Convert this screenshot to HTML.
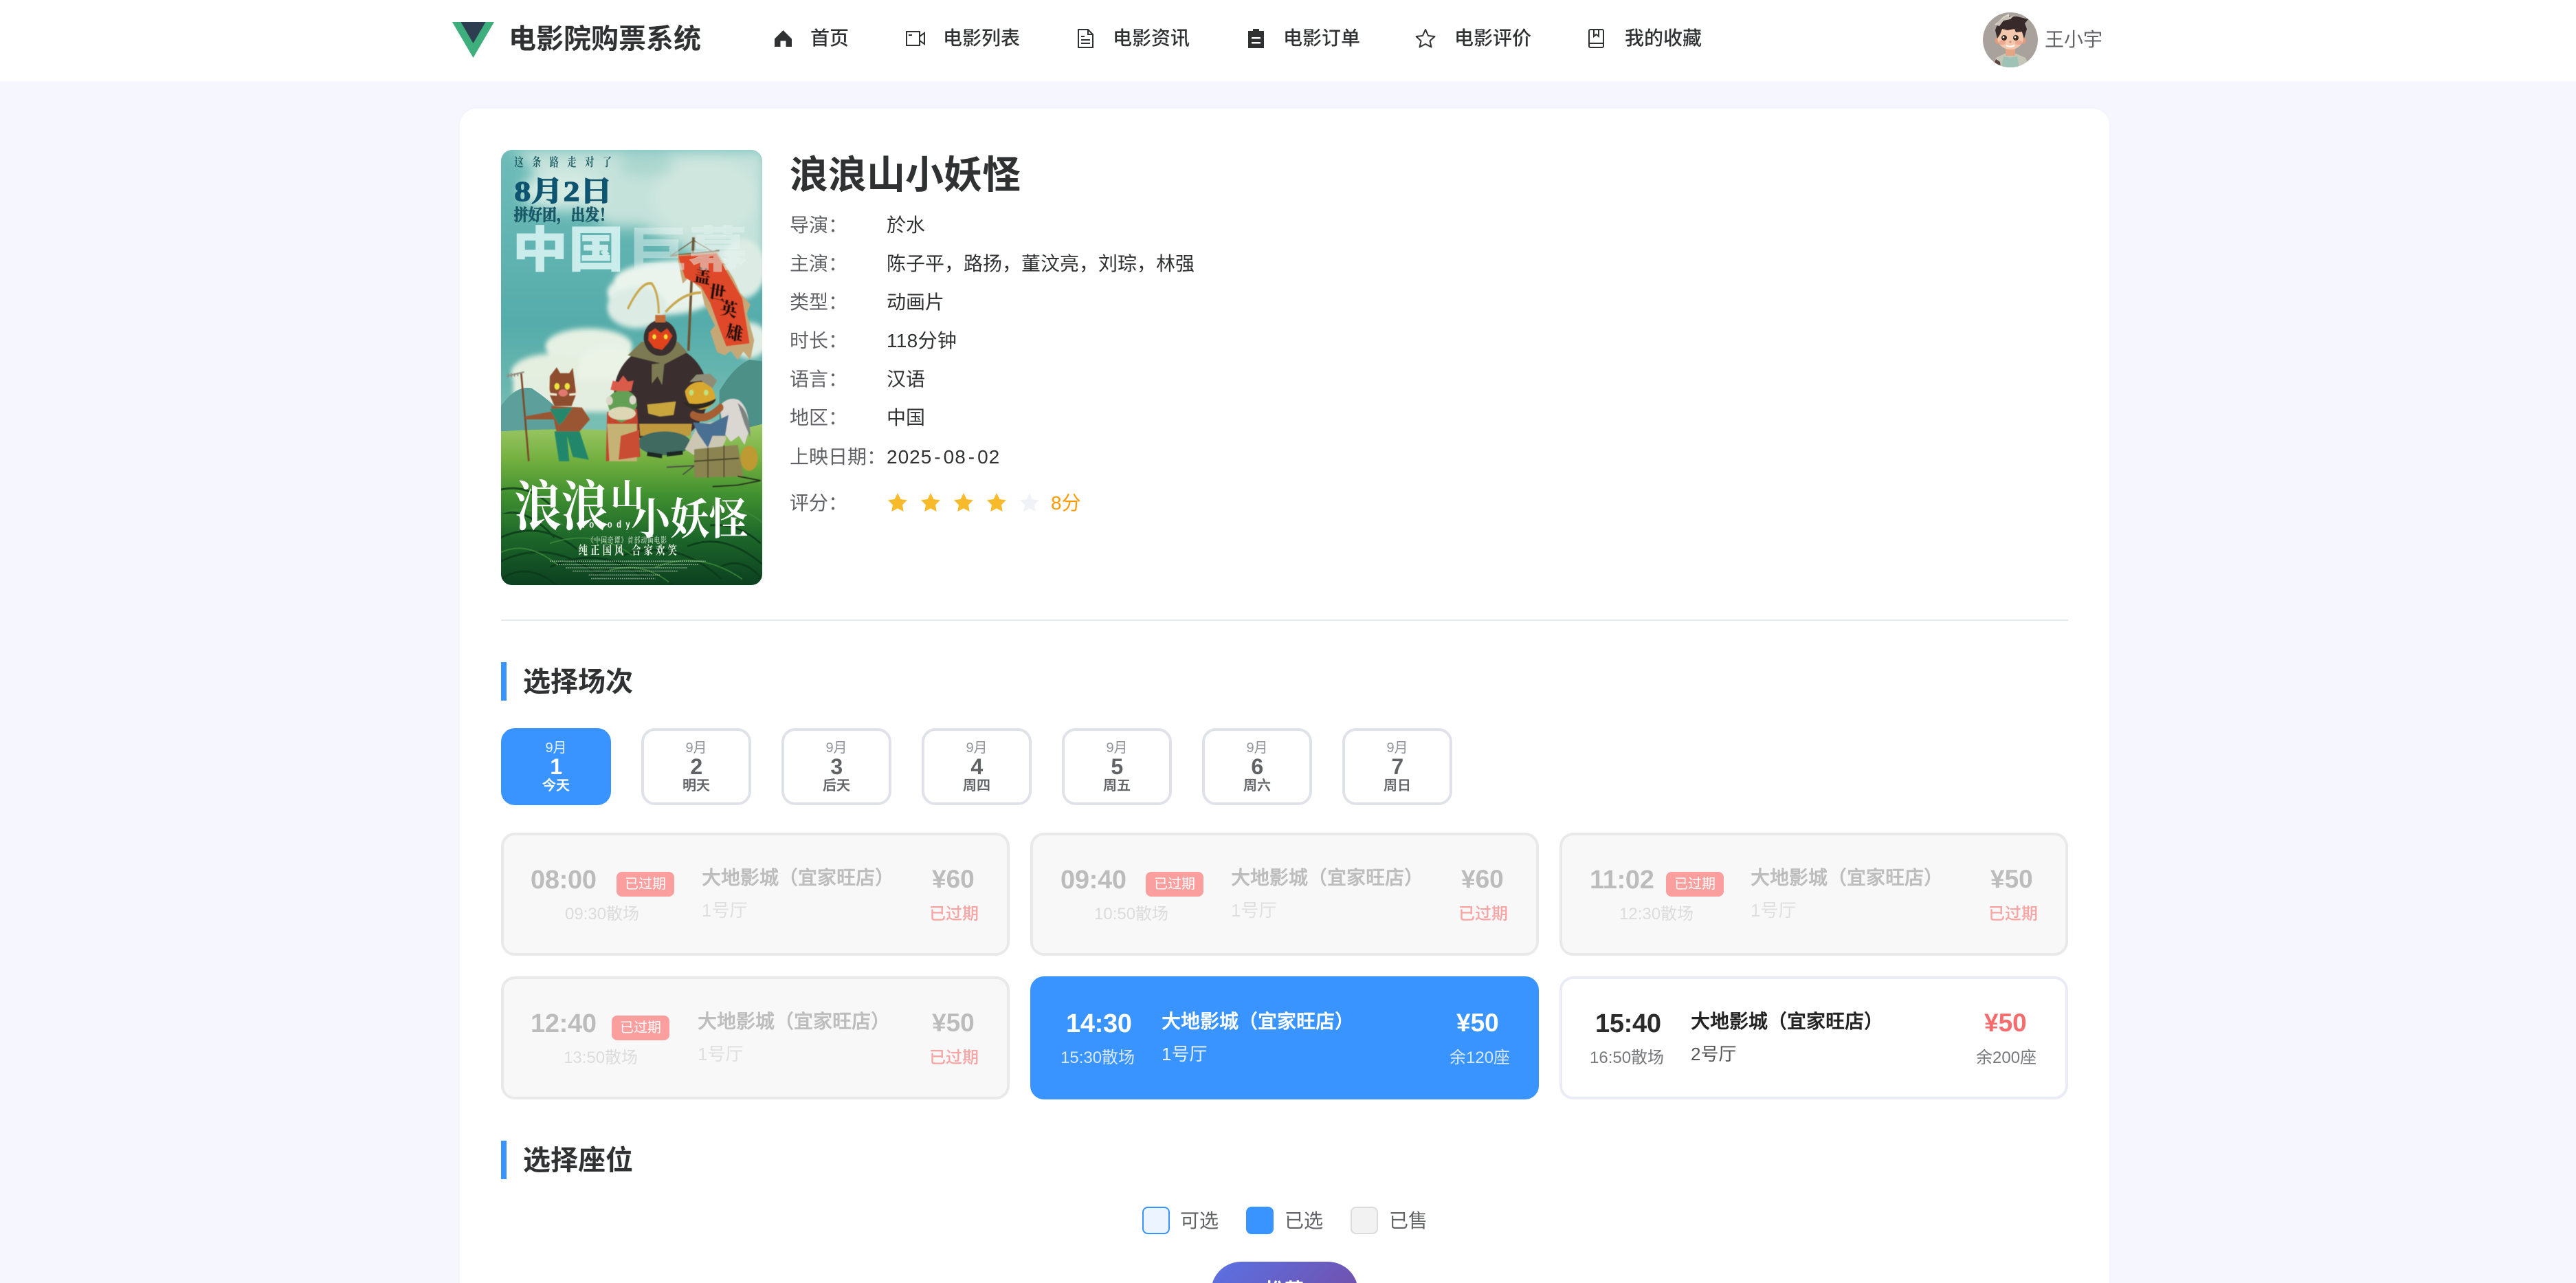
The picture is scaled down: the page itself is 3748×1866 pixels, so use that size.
<!DOCTYPE html>
<html lang="zh-CN"><head><meta charset="utf-8"><title>电影院购票系统</title>
<style>
html,body{margin:0;padding:0;width:3748px;height:1866px;overflow:hidden;background:#f6f7fe;}
body{position:relative;font-family:"Liberation Sans","Noto Sans CJK SC",sans-serif;color:#303133;}
.t{position:absolute;white-space:nowrap;line-height:40px;height:40px;}
.b{position:absolute;box-sizing:border-box;}
.nav{font-size:28px;font-weight:500;top:36px;color:#303133;}
.lab{font-size:28px;color:#606266;left:1149px;}
.val{font-size:28px;color:#303133;left:1290px;}
.h2{font-size:40px;font-weight:700;color:#303133;left:761px;line-height:56px;height:56px;}
.bar{left:729px;width:8px;height:56px;background:#3a94ff;}
.tab{top:1059px;width:160px;height:112px;border:4px solid #e0e2ea;border-radius:20px;background:#fff;text-align:center;color:#606266;}
.tab.on{background:#3a94ff;border-color:#3a94ff;color:#fff;}
.tab div{position:absolute;left:-4px;right:-4px;}
.tab .m{top:10px;font-size:20px;line-height:30px;color:#909399;}
.tab .d{top:32px;font-size:32px;line-height:40px;font-weight:700;letter-spacing:-.5px;}
.tab .w{top:65px;font-size:20px;line-height:30px;font-weight:500;-webkit-text-stroke:.3px currentColor;}
.tab.on .m{color:#e9f2ff;}
.card{width:740px;height:179px;border:4px solid #e9e9e9;border-radius:20px;background:#f8f8f8;}
.tm{font-size:38px;font-weight:700;color:#bcbcbc;letter-spacing:-.3px;}
.sub{font-size:24px;color:#dcdcdc;}
.cin{font-size:28px;font-weight:500;color:#bdbdbd;-webkit-text-stroke:.5px currentColor;}
.hall{font-size:26px;color:#dfdfdf;}
.pr{font-size:37px;font-weight:700;color:#bcbcbc;}
.ex{font-size:24px;font-weight:500;color:#f9a3a3;}
.bd{width:84px;height:36px;border-radius:8px;background:#fa9e9e;color:#fff;font-size:20px;line-height:36px;text-align:center;}
</style></head><body>

<!-- header -->
<div class="b" style="left:0;top:0;width:3748px;height:118px;background:#fff"></div>
<svg class="b" style="left:658px;top:32px" width="61" height="52" viewBox="0 0 61 52">
<polygon points="0,0 61,0 30.5,52" fill="#3eaf7c"/><polygon points="12.5,0 48.5,0 30.5,31" fill="#2c3e50"/></svg>
<div class="t" style="left:740px;top:33px;font-size:40px;font-weight:700;line-height:48px;height:48px;color:#303133">电影院购票系统</div>

<svg class="b" style="left:1127px;top:44px" width="25" height="24" viewBox="0 0 25 24"><path d="M12.5 0 25 12.5V24H16.5V15.5H8.5V24H0V12.5Z" fill="#303133"/></svg>
<div class="t nav" style="left:1179px">首页</div>
<svg class="b" style="left:1318px;top:44px" width="28" height="24" viewBox="0 0 28 24" fill="none" stroke="#303133" stroke-width="2"><rect x="1" y="2" width="19" height="20"/><path d="M20 9 27 4V20L20 15"/><path d="M4 7H9" stroke-width="2"/></svg>
<div class="t nav" style="left:1372px">电影列表</div>
<svg class="b" style="left:1568px;top:42px" width="23" height="28" viewBox="0 0 23 28" fill="none" stroke="#303133" stroke-width="2"><path d="M1 1H15L22 8V27H1Z"/><path d="M15 1V8H22M5 11H10M5 16H18M5 21H18"/></svg>
<div class="t nav" style="left:1619px">电影资讯</div>
<svg class="b" style="left:1816px;top:42px" width="23" height="28" viewBox="0 0 23 28"><path d="M7 0H16V3H23V28H0V3H7Z" fill="#303133"/><path d="M5 12H18V14.5H5ZM5 19H18V21.5H5Z" fill="#fff"/></svg>
<div class="t nav" style="left:1867px">电影订单</div>
<svg class="b" style="left:2059px;top:41px" width="30" height="29" viewBox="0 0 30 29" fill="none" stroke="#303133" stroke-width="2" stroke-linejoin="round"><path d="M15 2 19 11 28.5 12 21.5 18.5 23.5 27.5 15 23 6.5 27.5 8.5 18.5 1.5 12 11 11Z"/></svg>
<div class="t nav" style="left:2116px">电影评价</div>
<svg class="b" style="left:2311px;top:42px" width="23" height="28" viewBox="0 0 23 28" fill="none" stroke="#303133" stroke-width="2"><rect x="1" y="1" width="21" height="26" rx="2"/><path d="M1 21H22"/><path d="M8 1V11L11.5 8 15 11V1"/></svg>
<div class="t nav" style="left:2364px">我的收藏</div>

<svg class="b" style="left:2885px;top:18px" width="80" height="80" viewBox="0 0 80 80">
<defs><clipPath id="av"><circle cx="40" cy="40" r="40"/></clipPath></defs>
<g clip-path="url(#av)"><rect width="80" height="80" fill="#a9a29c"/>
<path d="M14 80 19 66 32 60 48 60 62 66 68 80Z" fill="#c5c7b6"/>
<path d="M27 80 30 64 40 66 50 64 53 80Z" fill="#9fc2b6"/>
<path d="M14 80 19 68 25 72 26 80Z" fill="#5a4440"/>
<rect x="33" y="48" width="14" height="15" fill="#e4a585"/>
<ellipse cx="21" cy="41" rx="3.5" ry="5" fill="#df9c7e"/><ellipse cx="59" cy="41" rx="3.5" ry="5" fill="#df9c7e"/>
<ellipse cx="40" cy="37" rx="19" ry="17" fill="#f3c8ac"/>
<ellipse cx="28" cy="44" rx="5" ry="3.5" fill="#ee9f8b" opacity=".75"/><ellipse cx="52" cy="44" rx="5" ry="3.5" fill="#ee9f8b" opacity=".75"/>
<circle cx="31" cy="37" r="4" fill="#3b2b24"/><circle cx="48" cy="37" r="4" fill="#3b2b24"/><circle cx="30" cy="36" r="1.3" fill="#fff"/><circle cx="47" cy="36" r="1.3" fill="#fff"/>
<path d="M34 48Q40 51.500 46 48" stroke="#fff" stroke-width="2" fill="none"/><circle cx="40" cy="43" r="1.6" fill="#d98f76"/>
<path d="M21 38 18 26 22 14 34 6 50 6 62 9 66 10 61 16 64 24 60 38 57 28 48 29 46 24 36 26 28 24 25 32Z" fill="#38292a"/>
<path d="M17 18 24 12 30 6 38 2 38 7 46 4 40 10 30 12 24 20Z" fill="#e4ded4" opacity=".85"/>
</g></svg>
<div class="t" style="left:2975px;top:38px;font-size:28px;color:#606266">王小宇</div>

<!-- main card -->
<div class="b" style="left:669px;top:158px;width:2400px;height:1760px;background:#fff;border-radius:24px;box-shadow:0 0 6px rgba(0,0,0,.03)"></div>

<!-- poster -->
<svg class="b" style="left:729px;top:218px;border-radius:16px" width="380" height="633" viewBox="87 42 1140 1458" preserveAspectRatio="none">
<defs>
<linearGradient id="sky" x1="0" y1="0" x2="0" y2="1"><stop offset="0" stop-color="#6fbcb9"/><stop offset=".4" stop-color="#55acaa"/><stop offset=".66" stop-color="#7cc0b4"/></linearGradient>
<linearGradient id="gr" x1="0" y1="0" x2="0" y2="1"><stop offset="0" stop-color="#9cc866"/><stop offset=".22" stop-color="#74b040"/><stop offset=".45" stop-color="#3f8f30"/><stop offset=".7" stop-color="#1d672a"/><stop offset="1" stop-color="#0c4020"/></linearGradient>
<filter id="bl" x="-20%" y="-20%" width="140%" height="140%"><feGaussianBlur stdDeviation="24"/></filter>
<filter id="bl2" x="-20%" y="-20%" width="140%" height="140%"><feGaussianBlur stdDeviation="9"/></filter>
<filter id="bl3"><feGaussianBlur stdDeviation="1.2"/></filter>
</defs>
<rect x="87" y="42" width="1140" height="1458" fill="url(#sky)"/>
<g filter="url(#bl)">
<path d="M130 42H1240V420L1080 440 900 380 700 300 560 300 400 210 280 150 180 70Z" fill="#c4e2da"/>
<ellipse cx="360" cy="180" rx="190" ry="65" fill="#d4ebe3"/>
<ellipse cx="980" cy="200" rx="230" ry="130" fill="#cfe6de"/>
<ellipse cx="720" cy="90" rx="120" ry="40" fill="#a9d6ce"/>
</g>
<g filter="url(#bl2)">
<ellipse cx="790" cy="520" rx="240" ry="75" fill="#e6f2ea"/>
<ellipse cx="900" cy="480" rx="320" ry="70" fill="#eaf4ec"/>
<ellipse cx="680" cy="570" rx="130" ry="70" fill="#dcece4"/>
<ellipse cx="1140" cy="440" rx="100" ry="100" fill="#dcece4"/>
<ellipse cx="470" cy="700" rx="190" ry="60" fill="#e6f1e4"/>
<ellipse cx="310" cy="790" rx="180" ry="65" fill="#e4efe0"/>
<ellipse cx="560" cy="780" rx="140" ry="80" fill="#eaf3e6"/>
<ellipse cx="1170" cy="680" rx="80" ry="60" fill="#dfeee4"/>
<rect x="140" y="810" width="520" height="110" fill="#e4eee0"/>
</g>
<path d="M87 900Q150 830 220 840 300 880 360 930L400 1000H87Z" fill="#5d9f9a"/>
<path d="M1040 850Q1100 770 1170 745L1227 750V1000H1040Z" fill="#4c9087"/>
<path d="M87 985Q500 965 800 1000 1000 1010 1227 960V1500H87Z" fill="url(#gr)"/>
<!-- grass strokes -->
<g fill="none" stroke="#0c3a1a" stroke-width="7" opacity=".8">
<path d="M87 1180Q200 1160 300 1230"/><path d="M87 1340Q260 1280 420 1380"/><path d="M87 1420Q300 1340 520 1470"/>
<path d="M300 1440Q520 1360 720 1480"/><path d="M620 1400Q850 1340 1050 1480"/><path d="M900 1370Q1060 1320 1227 1430"/>
<path d="M1000 1300Q1120 1290 1220 1360"/><path d="M87 1480Q200 1420 330 1500"/><path d="M90 1260Q200 1240 320 1340"/><path d="M480 1470Q660 1400 840 1500"/><path d="M1040 1440Q1140 1400 1227 1480"/>
</g>
<g fill="none" stroke="#3f8d3c" stroke-width="5" opacity=".7">
<path d="M87 1260Q220 1220 360 1300"/><path d="M300 1360Q500 1310 660 1400"/><path d="M760 1440Q950 1380 1140 1480"/><path d="M1060 1240Q1150 1240 1227 1290"/><path d="M87 1390Q200 1350 330 1430"/><path d="M560 1450Q700 1420 820 1490"/>
</g>
<g filter="url(#bl3)">
<!-- banner -->
<path d="M927 335 905 715" stroke="#6d5436" stroke-width="11"/>
<path d="M825 397 1040 380" stroke="#7c6242" stroke-width="6"/>
<path d="M832 395 927 345 1015 385" stroke="#6d5436" stroke-width="3" fill="none"/>
<path d="M855 395 880 490 905 470 960 510 975 560 1020 630 1000 650 1030 720 1065 730 1090 715 1120 745 1145 718 1175 745 1192 680 1160 590 1175 560 1130 520 1100 470 1030 385Z" fill="#c6a877"/>
<path d="M860 398 1027 388 1095 480 1140 540 1172 690 1070 700 1040 640 1000 555 960 500 890 470Z" fill="#df4a29"/>
<g font-family="Liberation Serif,Noto Serif CJK SC,serif" font-weight="900" fill="#1c0c08" font-size="80">
<text transform="translate(925,480) rotate(10) scale(.95,.75)">盖</text>
<text transform="translate(990,535) rotate(10) scale(.95,.75)">世</text>
<text transform="translate(1040,590) rotate(10) scale(.95,.75)">英</text>
<text transform="translate(1065,670) rotate(10) scale(.95,.75)">雄</text></g>
<!-- plume -->
<path d="M640 575Q700 480 745 490 775 520 775 590" fill="none" stroke="#c8a850" stroke-width="9"/>
<path d="M805 585Q880 520 960 520" fill="none" stroke="#c8a850" stroke-width="9"/>
<!-- monkey -->
<ellipse cx="785" cy="860" rx="205" ry="165" fill="#3a2e2e"/>
<path d="M640 730 700 685 860 685 900 720 800 760Z" fill="#7b7a52"/>
<path d="M745 760 800 755 790 830 770 800 745 825Z" fill="#7b7a52"/>
<ellipse cx="782" cy="672" rx="72" ry="60" fill="#3a2e2e"/>
<path d="M732 655 760 640 785 655 812 640 835 665 815 690 790 712 755 705 730 680Z" fill="#e0431f"/>
<circle cx="756" cy="668" r="8" fill="#f2e23e"/><circle cx="806" cy="668" r="8" fill="#f2e23e"/>
<path d="M760 595 805 595 805 620 760 620Z" fill="#c66a38"/>
<path d="M725 895 850 885 840 930 780 935 730 925Z" fill="#c8a53c"/>
<path d="M690 960 920 960 915 1000 695 1000Z" fill="#bf9a3c"/>
<ellipse cx="800" cy="1025" rx="115" ry="40" fill="#3f6960"/>
<path d="M725 1060 790 1068 M810 1062 880 1056" stroke="#1e2620" stroke-width="14"/>
<!-- pig -->
<path d="M175 790 208 1085" stroke="#7b4a2b" stroke-width="8"/>
<path d="M112 800 188 786M118 790v14M132 790v14M146 790v12M160 788v12" stroke="#8f8d80" stroke-width="5" fill="none"/>
<path d="M190 935 310 918 320 945 195 945Z" fill="#9a5733"/>
<path d="M305 900 440 905 475 945 430 985 330 990Z" fill="#9a5733"/>
<path d="M320 985 430 985 470 1080 400 1070 375 1000 385 1085 340 1085Z" fill="#24876a"/>
<path d="M300 910 400 905 360 950 340 965Z" fill="#28876a"/>
<path d="M300 800 330 770 345 790 385 790 400 772 415 860 395 900 320 900 298 860Z" fill="#8e4e2f"/>
<circle cx="331" cy="834" r="11" fill="#ede63c"/><circle cx="376" cy="834" r="11" fill="#ede63c"/>
<ellipse cx="358" cy="856" rx="20" ry="12" fill="#e07a70"/>
<path d="M290 835 300 860 330 862M425 830 415 860 385 862" stroke="#f0e8d0" stroke-width="7" fill="none"/>
<!-- frog -->
<path d="M545 1085 550 920 680 910 695 1070Z" fill="#c4452e"/>
<path d="M560 1085 550 960 680 960 680 1085Z" fill="#c5b274"/>
<path d="M610 1000 690 980 690 1070 600 1080Z" fill="#c84d30"/>
<path d="M550 880Q580 840 640 850 680 860 680 900 650 950 610 955 560 940 550 880Z" fill="#639f55"/>
<ellipse cx="615" cy="925" rx="60" ry="22" fill="#ddd7b6"/>
<circle cx="560" cy="882" r="15" fill="#dbd7c6"/><circle cx="662" cy="880" r="15" fill="#dbd7c6"/>
<path d="M565 845 575 815 600 820 620 798 640 818 665 815 655 850 590 850Z" fill="#d95b4c"/>
<!-- toad & horse -->
<path d="M1040 900Q1080 865 1125 880 1170 905 1170 980L1150 1030 1125 1000 1090 1020 1060 990Z" fill="#dad6d2"/>
<path d="M1120 890Q1175 920 1175 1005L1150 960Z" fill="#7b8481"/>
<path d="M890 1045 950 960 1040 950 1070 1010 1040 1060 1000 1085 930 1065Z" fill="#cbc7b2"/>
<path d="M925 955 1000 960 1080 930 1065 1000 1010 1000 990 1040 945 990Z" fill="#4a6f93"/>
<path d="M925 930Q980 955 1045 905" stroke="#a55f33" stroke-width="26" fill="none" stroke-linecap="round"/>
<path d="M890 850Q920 810 985 822 1030 850 1020 885 980 925 925 905 895 885 890 850Z" fill="#d8a92f"/>
<path d="M880 885Q950 905 1025 875 1020 900 950 910 900 910 880 885Z" fill="#2f2a22"/>
<path d="M910 820 940 795 1000 792 1030 815 1010 840 960 815Z" fill="#8f8d75"/>
<circle cx="918" cy="855" r="10" fill="#bfe07a"/><circle cx="982" cy="855" r="10" fill="#bfe07a"/>
<!-- bags -->
<ellipse cx="1170" cy="1075" rx="38" ry="42" fill="#bd9a33"/>
<path d="M930 1045 1120 1030 1145 1135 930 1140Z" fill="#8b8451"/>
<path d="M990 1040V1140M1060 1032V1138M930 1085 1125 1075" stroke="#4b4628" stroke-width="5"/>
<path d="M810 1105 930 1100 880 1130" stroke="#4a4a4a" stroke-width="4" fill="none"/>
<path d="M1120 1135 1220 1150 1120 1165 1010 1170" stroke="#232a1a" stroke-width="4" fill="none"/>
</g>
<!-- text -->
<g font-family="Liberation Serif,Noto Serif CJK SC,serif" font-weight="700">
<text x="145" y="97" font-size="40" fill="#1f5d66" textLength="425" lengthAdjust="spacing">这条路走对了</text>
<text x="145" y="212" font-size="94" fill="#0f5570" textLength="428" lengthAdjust="spacingAndGlyphs" stroke="#0f5570" stroke-width="3">8月2日</text>
<text x="143" y="278" font-size="54" fill="#1a5868" textLength="435" lengthAdjust="spacingAndGlyphs" stroke="#1a5868" stroke-width="2">拼好团，出发！</text>
</g>
<g font-family="Liberation Sans,Noto Sans CJK SC,sans-serif" font-weight="900">
<text x="135" y="435" font-size="165" fill="#d6f3f2" opacity=".9" textLength="490" lengthAdjust="spacingAndGlyphs">中国</text>
<text x="640" y="435" font-size="165" fill="#e6f4f2" opacity=".5" textLength="525" lengthAdjust="spacingAndGlyphs">巨幕</text>
</g>
<g font-family="Noto Serif CJK SC,serif" font-weight="700" fill="#fff">
<text x="145" y="1300" font-size="180" textLength="410" lengthAdjust="spacingAndGlyphs">浪浪</text>
<text x="565" y="1235" font-size="105" textLength="145" lengthAdjust="spacingAndGlyphs">山</text>
<text x="655" y="1330" font-size="145" textLength="510" lengthAdjust="spacingAndGlyphs">小妖怪</text>
</g>
<text x="428" y="1308" font-family="Liberation Sans,sans-serif" font-weight="700" font-size="34" fill="#fff" textLength="222" lengthAdjust="spacing">Nobody</text>
<g font-family="Liberation Serif,Noto Serif CJK SC,serif" fill="#e8efe4">
<text x="465" y="1358" font-size="26" textLength="345" lengthAdjust="spacing">《中国奇谭》首部动画电影</text>
<text x="425" y="1398" font-size="40" font-weight="700" textLength="430" lengthAdjust="spacing">纯正国风 合家欢笑</text>
</g>
<path d="M300 1420H980M330 1431H950M370 1442H900M400 1453H860M470 1466H780M480 1478H760" stroke="#cfdccf" stroke-width="4" opacity=".55" stroke-dasharray="6 3"/>
</svg>

<!-- info -->
<div class="t" style="left:1149px;top:227px;font-size:56px;font-weight:700;line-height:56px;height:56px;color:#303133">浪浪山小妖怪</div>
<div class="t lab" style="top:308px">导演：</div><div class="t val" style="top:308px">於水</div>
<div class="t lab" style="top:364px">主演：</div><div class="t val" style="top:364px">陈子平，路扬，董汶亮，刘琮，林强</div>
<div class="t lab" style="top:420px">类型：</div><div class="t val" style="top:420px">动画片</div>
<div class="t lab" style="top:476px">时长：</div><div class="t val" style="top:476px;letter-spacing:.3px">118分钟</div>
<div class="t lab" style="top:532px">语言：</div><div class="t val" style="top:532px">汉语</div>
<div class="t lab" style="top:588px">地区：</div><div class="t val" style="top:588px">中国</div>
<div class="t lab" style="top:645px">上映日期：</div><div class="t val" style="top:645px;letter-spacing:1px">2025<span style="margin:0 3px">-</span>08<span style="margin:0 3px">-</span>02</div>
<div class="t lab" style="top:712px">评分：</div>
<svg class="b" style="left:1292px;top:717px" width="230" height="28" viewBox="0 0 230 28">
<defs><path id="s" d="M14 0 18.3 9 28 10.4 21 17.3 22.7 27 14 22.4 5.3 27 7 17.3 0 10.4 9.7 9Z"/></defs>
<use href="#s" x="0" fill="#f7ba2a"/><use href="#s" x="48" fill="#f7ba2a"/><use href="#s" x="96" fill="#f7ba2a"/><use href="#s" x="144" fill="#f7ba2a"/><use href="#s" x="192" fill="#eff2f7"/></svg>
<div class="t" style="left:1529px;top:712px;font-size:28px;color:#ff9900">8分</div>

<div class="b" style="left:729px;top:901px;width:2280px;height:2px;background:#e8eaf3"></div>

<div class="b bar" style="top:963px"></div>
<div class="t h2" style="top:964px">选择场次</div>

<div class="b tab on" style="left:729px"><div class="m">9月</div><div class="d">1</div><div class="w">今天</div></div>
<div class="b tab" style="left:933px"><div class="m">9月</div><div class="d">2</div><div class="w">明天</div></div>
<div class="b tab" style="left:1137px"><div class="m">9月</div><div class="d">3</div><div class="w">后天</div></div>
<div class="b tab" style="left:1341px"><div class="m">9月</div><div class="d">4</div><div class="w">周四</div></div>
<div class="b tab" style="left:1545px"><div class="m">9月</div><div class="d">5</div><div class="w">周五</div></div>
<div class="b tab" style="left:1749px"><div class="m">9月</div><div class="d">6</div><div class="w">周六</div></div>
<div class="b tab" style="left:1953px"><div class="m">9月</div><div class="d">7</div><div class="w">周日</div></div>

<!-- card 1 -->
<div class="b card" style="left:729px;top:1211px"></div>
<div class="t tm" style="left:772px;top:1260px">08:00</div>
<div class="b bd" style="left:897px;top:1268px">已过期</div>
<div class="t sub" style="left:822px;top:1310px">09:30散场</div>
<div class="t cin" style="left:1021px;top:1257px">大地影城（宜家旺店）</div>
<div class="t hall" style="left:1021px;top:1304px">1号厅</div>
<div class="t pr" style="left:1356px;top:1259px">¥60</div>
<div class="t ex" style="left:1352px;top:1310px">已过期</div>
<!-- card 2 -->
<div class="b card" style="left:1499px;top:1211px"></div>
<div class="t tm" style="left:1543px;top:1260px">09:40</div>
<div class="b bd" style="left:1667px;top:1268px">已过期</div>
<div class="t sub" style="left:1592px;top:1310px">10:50散场</div>
<div class="t cin" style="left:1791px;top:1257px">大地影城（宜家旺店）</div>
<div class="t hall" style="left:1791px;top:1304px">1号厅</div>
<div class="t pr" style="left:2126px;top:1259px">¥60</div>
<div class="t ex" style="left:2122px;top:1310px">已过期</div>
<!-- card 3 -->
<div class="b card" style="left:2269px;top:1211px"></div>
<div class="t tm" style="left:2313px;top:1260px">11:02</div>
<div class="b bd" style="left:2424px;top:1268px">已过期</div>
<div class="t sub" style="left:2356px;top:1310px">12:30散场</div>
<div class="t cin" style="left:2547px;top:1257px">大地影城（宜家旺店）</div>
<div class="t hall" style="left:2547px;top:1304px">1号厅</div>
<div class="t pr" style="left:2896px;top:1259px">¥50</div>
<div class="t ex" style="left:2893px;top:1310px">已过期</div>
<!-- card 4 -->
<div class="b card" style="left:729px;top:1420px"></div>
<div class="t tm" style="left:772px;top:1469px">12:40</div>
<div class="b bd" style="left:890px;top:1477px">已过期</div>
<div class="t sub" style="left:820px;top:1519px">13:50散场</div>
<div class="t cin" style="left:1015px;top:1466px">大地影城（宜家旺店）</div>
<div class="t hall" style="left:1015px;top:1513px">1号厅</div>
<div class="t pr" style="left:1356px;top:1468px">¥50</div>
<div class="t ex" style="left:1352px;top:1519px">已过期</div>
<!-- card 5 -->
<div class="b card" style="left:1499px;top:1420px;background:#3a94ff;border-color:#3a94ff"></div>
<div class="t tm" style="left:1551px;top:1469px;color:#fff">14:30</div>
<div class="t sub" style="left:1543px;top:1519px;color:#d8e9ff">15:30散场</div>
<div class="t cin" style="left:1690px;top:1466px;color:#fff">大地影城（宜家旺店）</div>
<div class="t hall" style="left:1690px;top:1513px;color:#e6f1ff">1号厅</div>
<div class="t pr" style="left:2119px;top:1468px;color:#fff">¥50</div>
<div class="t sub" style="left:2109px;top:1519px;color:#d8e9ff">余120座</div>
<!-- card 6 -->
<div class="b card" style="left:2269px;top:1420px;background:#fff;border-color:#e9ebf5"></div>
<div class="t tm" style="left:2321px;top:1469px;color:#2b2b2b">15:40</div>
<div class="t sub" style="left:2313px;top:1519px;color:#77787c">16:50散场</div>
<div class="t cin" style="left:2460px;top:1466px;color:#222">大地影城（宜家旺店）</div>
<div class="t hall" style="left:2460px;top:1513px;color:#555">2号厅</div>
<div class="t pr" style="left:2887px;top:1468px;color:#f56c6c">¥50</div>
<div class="t sub" style="left:2875px;top:1519px;color:#77787c">余200座</div>

<div class="b bar" style="top:1659px"></div>
<div class="t h2" style="top:1660px">选择座位</div>

<div class="b" style="left:1662px;top:1755px;width:40px;height:40px;border-radius:8px;border:2px solid #3a94ff;background:#ecf5ff"></div>
<div class="t" style="left:1717px;top:1756px;font-size:28px;color:#606266">可选</div>
<div class="b" style="left:1813px;top:1755px;width:40px;height:40px;border-radius:8px;background:#3a94ff"></div>
<div class="t" style="left:1869px;top:1756px;font-size:28px;color:#606266">已选</div>
<div class="b" style="left:1965px;top:1755px;width:40px;height:40px;border-radius:8px;border:2px solid #dcdcdc;background:#f2f2f2"></div>
<div class="t" style="left:2021px;top:1756px;font-size:28px;color:#606266">已售</div>

<div class="b" style="left:1762px;top:1835px;width:214px;height:88px;border-radius:44px;background:linear-gradient(135deg,#5a72e4,#764ba2)"></div>
<div class="t" style="left:1841px;top:1857px;font-size:28px;font-weight:700;color:#fff">推荐</div>
</body></html>
